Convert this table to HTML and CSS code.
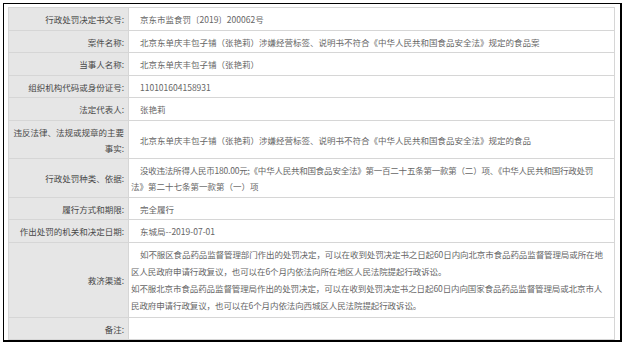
FILE: index.html
```html
<!DOCTYPE html>
<html lang="zh-CN">
<head>
<meta charset="utf-8">
<title>行政处罚决定书</title>
<link rel="stylesheet" href="styles.css">
</head>
<body>
<div class="frame">
  <table class="info">
    <tr><th>行政处罚决定书文号:</th><td>京东市监食罚〔2019〕200062号</td></tr>
    <tr><th>案件名称:</th><td>北京东单庆丰包子铺（张艳莉）涉嫌经营标签、说明书不符合《中华人民共和国食品安全法》规定的食品案</td></tr>
    <tr><th>当事人名称:</th><td>北京东单庆丰包子铺（张艳莉）</td></tr>
    <tr><th>组织机构代码或身份证号:</th><td>110101604158931</td></tr>
    <tr><th>法定代表人:</th><td>张艳莉</td></tr>
    <tr class="tall"><th>违反法律、法规或规章的主要事实:</th><td>北京东单庆丰包子铺（张艳莉）涉嫌经营标签、说明书不符合《中华人民共和国食品安全法》规定的食品</td></tr>
    <tr><th>行政处罚种类、依据:</th><td><span class="ln tight">没收违法所得人民币180.00元;《中华人民共和国食品安全法》第一百二十五条第一款第（二）项、《中华人民共和国行政处罚</span><br><span class="ln">法》第二十七条第一款第（一）项</span></td></tr>
    <tr><th>履行方式和期限:</th><td>完全履行</td></tr>
    <tr><th>作出处罚的机关和决定日期:</th><td>东城局--2019-07-01</td></tr>
    <tr class="remedy"><th>救济渠道:</th><td><span class="ln">如不服区食品药品监督管理部门作出的处罚决定，可以在收到处罚决定书之日起60日内向北京市食品药品监督管理局或所在地</span><br><span class="ln">区人民政府申请行政复议，也可以在6个月内依法向所在地区人民法院提起行政诉讼。</span><br><span class="ln">如不服北京市食品药品监督管理局作出的处罚决定，可以在收到处罚决定书之日起60日内向国家食品药品监督管理局或北京市人</span><br><span class="ln">民政府申请行政复议，也可以在6个月内依法向西城区人民法院提起行政诉讼。</span></td></tr>
    <tr><th>备注:</th><td></td></tr>
  </table>
</div>
</body>
</html>
```

FILE: styles.css
```css
html, body {
  margin: 0;
  padding: 0;
  background: #fff;
}

body {
  font-family: "Noto Sans CJK SC", "Noto Sans", sans-serif;
  font-size: 8.5px;
}

.frame {
  margin: 3px 0 0 3px;
  width: 609px;
  height: 333px;
  border-style: solid;
  border-color: #000;
  border-width: 1px 2px 2px 1px;
  padding: 3px 3px 0 4px;
  box-sizing: content-box;
  overflow: hidden;
}

.info {
  width: 607px;
  border-collapse: collapse;
  table-layout: fixed;
}

.info th,
.info td {
  border: 1px solid #d6d6d6;
  line-height: 16px;
  padding: 3px 0 2.5px;
  vertical-align: middle;
  font-weight: normal;
}

.info th {
  width: 113px;
  background: #e6e6e6;
  color: #484848;
  text-align: right;
  padding-left: 2px;
  padding-right: 4px;
}

.info td {
  color: #666;
  text-align: left;
  padding-left: 2px;
  padding-right: 5px;
  text-indent: 9px;
}

.info td .ln {
  white-space: nowrap;
}

.info td .tight {
  letter-spacing: -0.22px;
}

.remedy td {
  line-height: 17.2px;
}

.remedy td .ln {
  letter-spacing: -0.1px;
}
```
